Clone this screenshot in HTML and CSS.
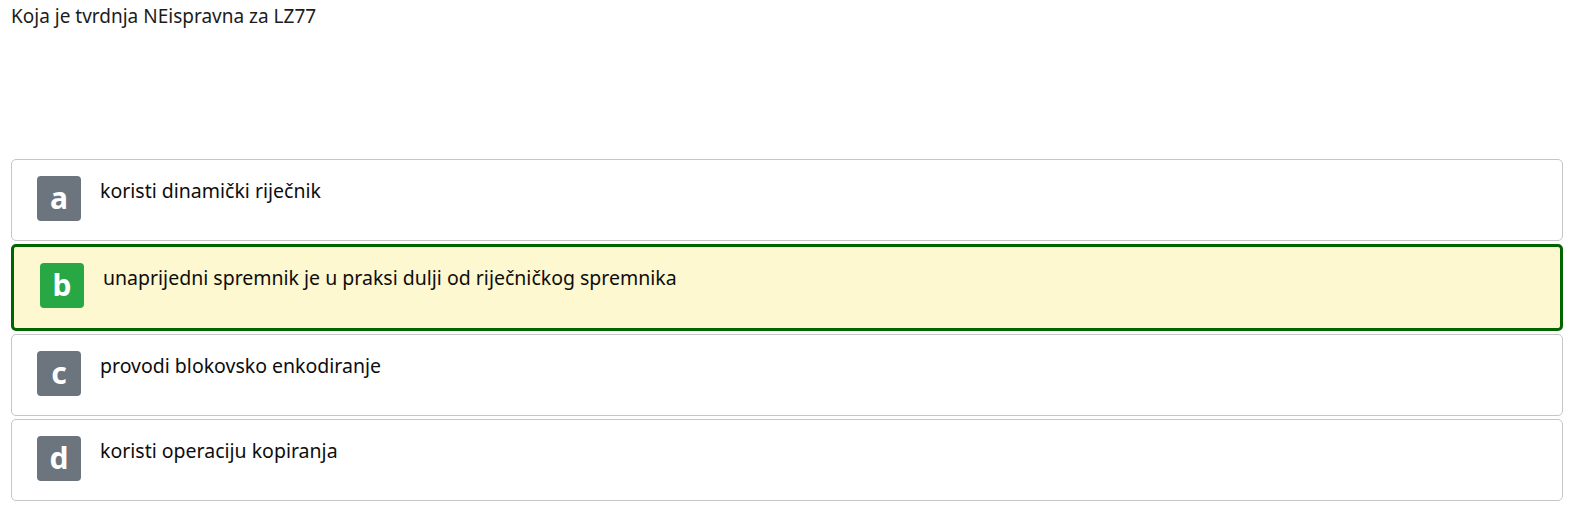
FILE: index.html
```html
<!DOCTYPE html>
<html lang="hr">
<head>
<meta charset="utf-8">
<link rel="stylesheet" href="styles.css">
</head>
<body>
<div class="page">
  <p class="question">Koja je tvrdnja NEispravna za LZ77</p>
  <div class="answers">
    <div class="answer">
      <span class="badge">a</span>
      <span class="text">koristi dinamički riječnik</span>
    </div>
    <div class="answer selected">
      <span class="badge">b</span>
      <span class="text">unaprijedni spremnik je u praksi dulji od riječničkog spremnika</span>
    </div>
    <div class="answer">
      <span class="badge">c</span>
      <span class="text">provodi blokovsko enkodiranje</span>
    </div>
    <div class="answer">
      <span class="badge">d</span>
      <span class="text">koristi operaciju kopiranja</span>
    </div>
  </div>
</div>
</body>
</html>
```
FILE: styles.css
```css
html, body {
  margin: 0;
  padding: 0;
  background: #fff;
}
body {
  font-family: "Noto Sans", sans-serif;
  color: #1c1c1c;
}
.page {
  padding: 2px 33px 0 11px;
}
.question {
  margin: 0 0 128px 0;
  font-size: 19px;
  line-height: 29px;
}
.answers {
  display: flex;
  flex-direction: column;
  gap: 3px;
}
.answer {
  display: flex;
  align-items: flex-start;
  min-height: 82px;
  box-sizing: border-box;
  border: 1px solid #c6c6c6;
  border-radius: 5px;
  padding: 16px 24px 0 25px;
  background: #fff;
}
.answer.selected {
  border: 3px solid #006400;
  background: #fdf8cf;
  min-height: 87px;
  padding: 16px 24px 0 26px;
}
.badge {
  flex: none;
  width: 44px;
  height: 45px;
  border-radius: 4px;
  background: #6c757d;
  color: #fff;
  font-weight: 700;
  font-size: 30px;
  line-height: 44px;
  text-align: center;
}
.selected .badge {
  background: #28a745;
}
.text {
  margin-left: 19px;
  font-size: 19.5px;
  line-height: 30px;
  color: #0d0d0d;
}
```
